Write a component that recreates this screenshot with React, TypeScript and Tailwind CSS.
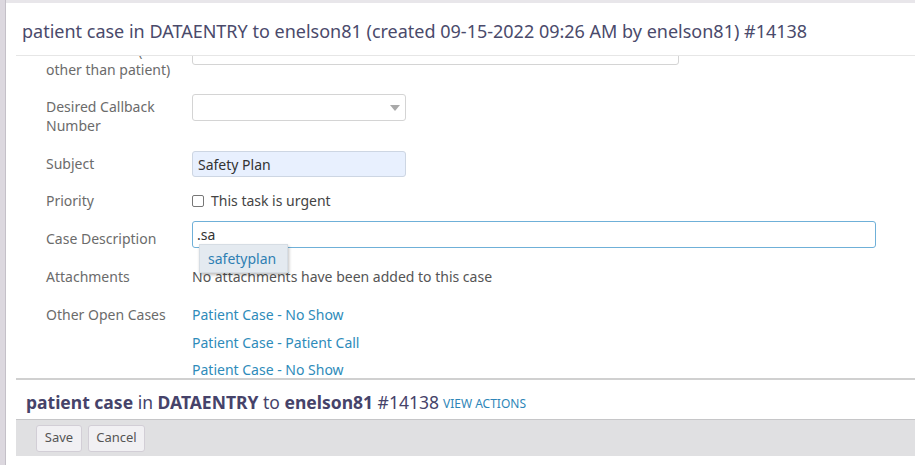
import { useState } from "react";

const font = { fontFamily: '"Noto Sans", "Open Sans", Arial, sans-serif' };

function Label({ children, className = "" }: { children: React.ReactNode; className?: string }) {
  return (
    <div className={`w-[146px] shrink-0 text-[14px] leading-[19px] text-[#6b6b6b] ${className}`}>
      {children}
    </div>
  );
}

const openCases = [
  "Patient Case - No Show",
  "Patient Case - Patient Call",
  "Patient Case - No Show",
];

export default function App() {
  const [urgent, setUrgent] = useState(false);

  return (
    <div className="flex h-[465px] w-[915px] overflow-hidden bg-white" style={font}>
      {/* page behind the dialog */}
      <div className="w-[6px] shrink-0 border-r border-[#c4c0c8] bg-[#dcd8df]" />

      <div className="flex min-w-0 flex-1 flex-col">
        <div className="h-[3px] shrink-0 bg-[#e8e6ea]" />

        <div className="flex min-h-0 flex-1 flex-col pl-[10px]">
          {/* header */}
          <div className="flex h-[53px] shrink-0 items-center border-b border-[#e6e6e6] pl-[6px] pt-[5px]">
            <h1 className="whitespace-nowrap text-[18px] font-normal text-[#4a4a6b]">
              patient case in DATAENTRY to enelson81 (created 09-15-2022 09:26 AM by enelson81) #14138
            </h1>
          </div>

          {/* scrolled form */}
          <div className="h-[322px] shrink-0 overflow-hidden pl-[30px]">
            <div className="mt-[-18px] flex flex-col">
              <div className="flex h-[56px] items-start">
                <Label className="pt-[3px]">
                  <div>Person to call (if</div>
                  <div>other than patient)</div>
                </Label>
                <div className="h-[27px] w-[487px] rounded-[3px] border border-[#d4d4d4] bg-white" />
              </div>

              <div className="flex h-[57px] items-start">
                <Label className="pt-[3px]">
                  <div>Desired Callback</div>
                  <div>Number</div>
                </Label>
                <div className="flex h-[27px] w-[214px] items-center justify-end rounded-[3px] border border-[#d4d4d4] bg-white pr-[5px]">
                  <svg width="10" height="6" viewBox="0 0 10 6">
                    <path d="M0 0h10L5 6z" fill="#a9a9a9" />
                  </svg>
                </div>
              </div>

              <div className="flex h-[37px] items-start">
                <Label className="pt-[3px]">Subject</Label>
                <div className="flex h-[26px] w-[214px] items-center rounded-[3px] border border-[#cdd6e3] bg-[#e8f0fe] pl-[5px] text-[14px] text-[#333]">
                  Safety Plan
                </div>
              </div>

              <div className="flex h-[33px] items-start">
                <Label className="pt-[3px]">Priority</Label>
                <label className="flex items-center gap-[7px] pt-[3px] text-[14px] leading-[19px] text-[#444]">
                  <input
                    type="checkbox"
                    checked={urgent}
                    onChange={(e) => setUrgent(e.target.checked)}
                    className="h-[12px] w-[12px] appearance-none rounded-[2px] border border-[#777] bg-white"
                  />
                  This task is urgent
                </label>
              </div>

              <div className="flex h-[40px] items-start">
                <Label className="pt-[8px]">Case Description</Label>
                <div className="relative">
                  <div className="flex h-[27px] w-[684px] items-center rounded-[3px] border border-[#6fb0d8] bg-white pl-[4px] text-[14px] text-[#333]">
                    .sa
                  </div>
                  {/* autocomplete menu */}
                  <div className="absolute left-[7px] top-[23px] z-10 flex h-[29px] w-[89px] items-center border border-[#d6dde4] bg-[#e4eaf0] pl-[8px] text-[14px] text-[#2f7fb3] shadow-[1px_2px_3px_rgba(0,0,0,0.25)]">
                    safetyplan
                  </div>
                </div>
              </div>

              <div className="flex h-[40px] items-start">
                <Label className="pt-[6px]">Attachments</Label>
                <div className="pt-[6px] text-[14px] leading-[19px] text-[#555]">
                  No attachments have been added to this case
                </div>
              </div>

              <div className="flex items-start">
                <Label className="pt-[4px]">Other Open Cases</Label>
                <div className="flex flex-col text-[14px] leading-[27.5px] text-[#2e8bba]">
                  {openCases.map((c, i) => (
                    <a key={i} href="#" className="hover:underline">
                      {c}
                    </a>
                  ))}
                </div>
              </div>
            </div>
          </div>

          {/* footer */}
          <div className="flex h-[41px] shrink-0 items-center gap-[4px] border-t-2 border-[#d0d0d0] pl-[10px] pt-[6px]">
            <span className="whitespace-nowrap text-[17.5px] text-[#46436a]">
              <b className="font-bold">patient case</b> in <b className="font-bold">DATAENTRY</b> to{" "}
              <b className="font-bold">enelson81</b> #14138
            </span>
            <a href="#" className="pt-[3px] text-[12px] uppercase text-[#2e86b8]">
              View Actions
            </a>
          </div>

          <div className="flex h-[37px] shrink-0 items-center gap-[6px] border-t border-[#c6c6c8] bg-[#e0e0e2] pl-[20px]">
            <button
              type="button"
              className="h-[27px] w-[46px] rounded-[3px] border border-[#d2ced6] bg-[#f1f0f3] text-[13px] text-[#555]"
            >
              Save
            </button>
            <button
              type="button"
              className="h-[27px] w-[57px] rounded-[3px] border border-[#d2ced6] bg-[#f1f0f3] text-[13px] text-[#555]"
            >
              Cancel
            </button>
          </div>
          <div className="flex-1 bg-white" />
        </div>
      </div>
    </div>
  );
}
